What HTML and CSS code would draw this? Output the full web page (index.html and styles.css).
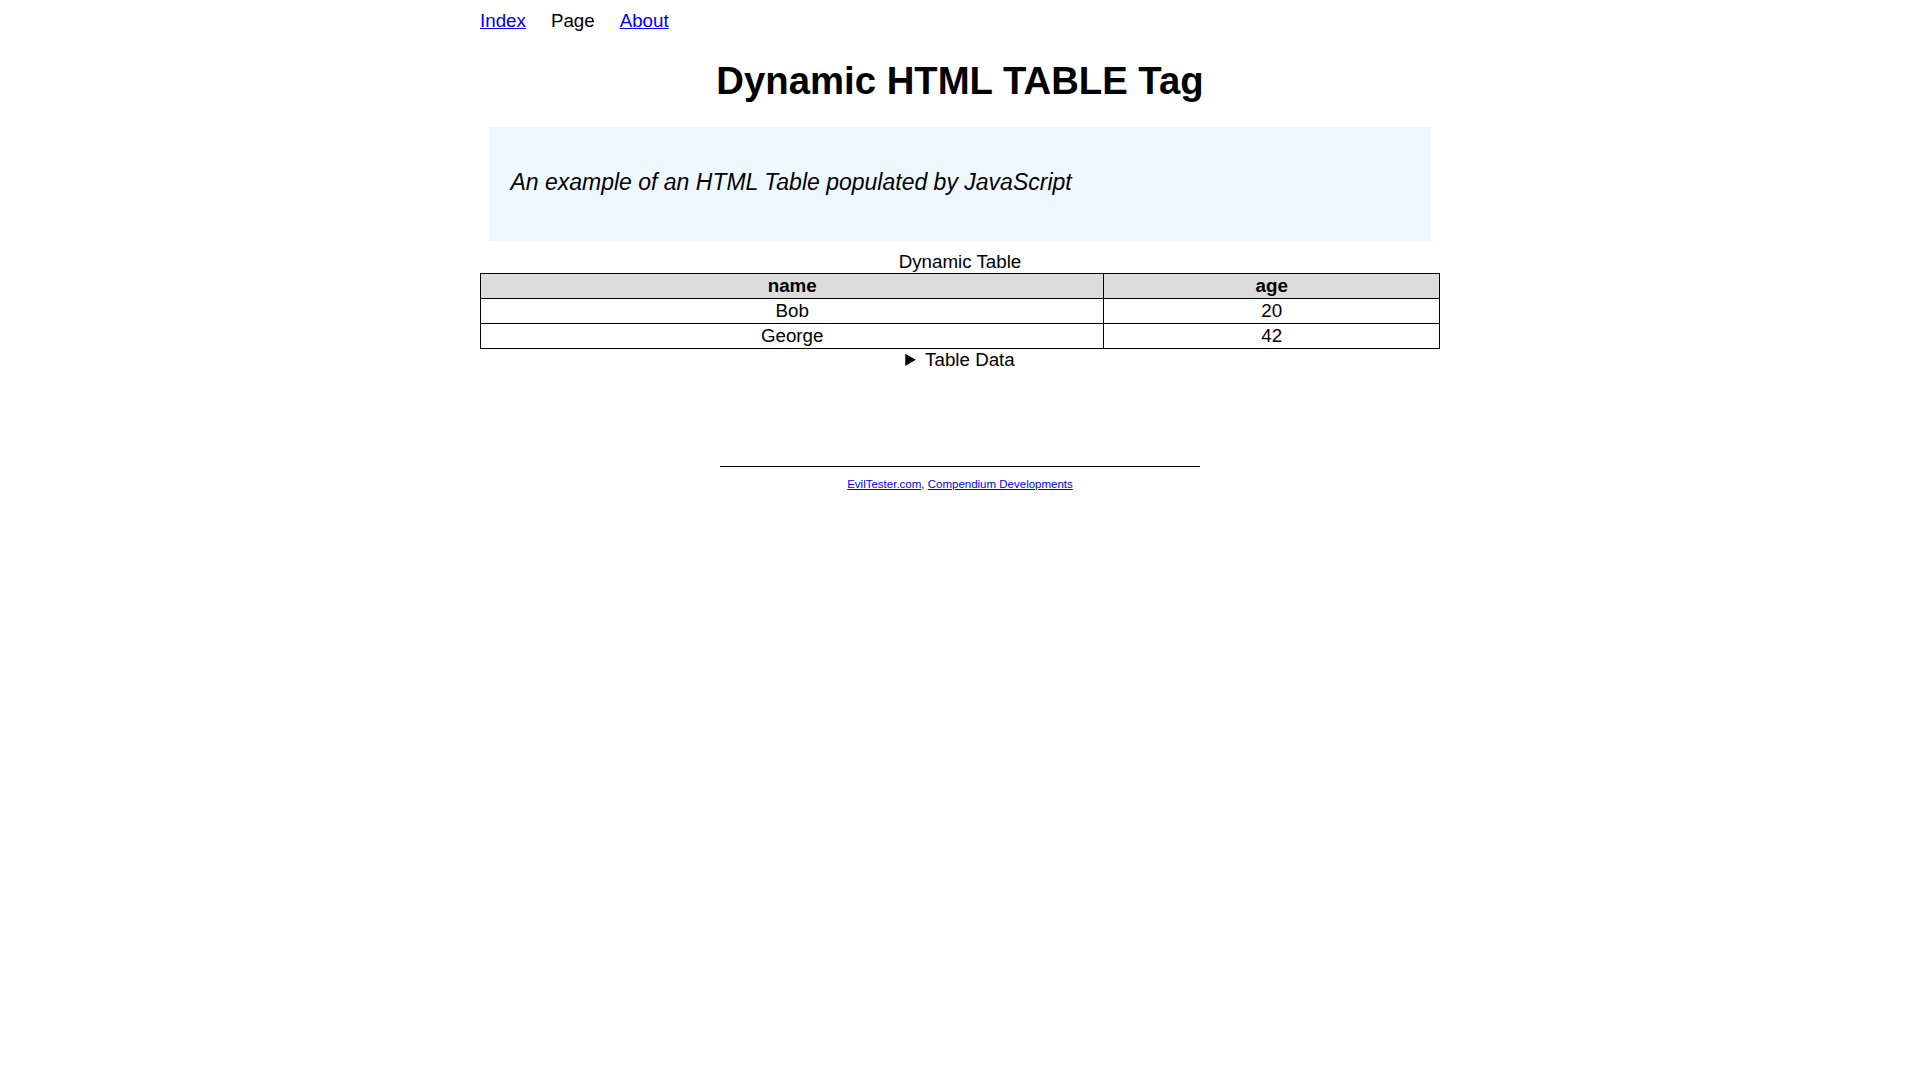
FILE: index.html
```html
<!DOCTYPE html>
<html lang="en">
<head>
<meta charset="utf-8">
<title>Dynamic HTML TABLE Tag</title>
<link rel="stylesheet" href="styles.css">
</head>
<body>
<div class="page">
  <nav class="nav">
    <a href="#" class="nav-link">Index</a>
    <span class="nav-current">Page</span>
    <a href="#" class="nav-link">About</a>
  </nav>
  <h1 class="title">Dynamic HTML TABLE Tag</h1>
  <div class="explanation">
    <p class="explanation-text">An example of an HTML Table populated by JavaScript</p>
  </div>
  <table class="data-table">
    <caption class="data-caption">Dynamic Table</caption>
    <thead>
      <tr><th class="col-name">name</th><th class="col-age">age</th></tr>
    </thead>
    <tbody>
      <tr><td>Bob</td><td>20</td></tr>
      <tr><td>George</td><td>42</td></tr>
    </tbody>
  </table>
  <details class="table-data">
    <summary class="table-data-summary">Table Data</summary>
  </details>
  <footer class="footer">
    <hr class="footer-rule">
    <p class="footer-links"><a href="#" class="footer-link">EvilTester.com</a>, <a href="#" class="footer-link">Compendium Developments</a></p>
  </footer>
</div>
</body>
</html>
```

FILE: styles.css
```css
html, body {
  margin: 0;
  padding: 0;
  background: #ffffff;
}

body {
  font-family: "Liberation Sans", Arial, sans-serif;
  font-size: 18.75px;
  color: #000000;
}

.page {
  width: 960px;
  margin: 0 auto;
  padding-top: 10px;
}

.nav {
  display: flex;
  gap: 25px;
  line-height: 21.5px;
}

.nav-link {
  color: #0000ee;
  text-decoration: underline;
}

.nav-current {
  color: #000000;
}

.title {
  margin: 27.5px 0 24.2px;
  font-size: 38.3px;
  font-weight: bold;
  text-align: center;
  line-height: 43.8px;
}

.explanation {
  margin: 0 9.4px 10.2px;
  padding: 42.1px 21px 45.5px;
  background: #f0f8ff;
}

.explanation-text {
  margin: 0;
  font-size: 23px;
  font-style: italic;
  line-height: 26.4px;
}

.data-table {
  width: 960px;
  border-collapse: collapse;
  border: 1px solid #000000;
}

.data-caption {
  line-height: 21.5px;
  padding-bottom: 0.4px;
  text-align: center;
}

.data-table th,
.data-table td {
  border: 1px solid #000000;
  padding: 1px 2px;
  line-height: 22px;
  text-align: center;
}

.data-table th {
  background: #dcdcdc;
  font-weight: bold;
}

.col-name {
  width: 65%;
}

.col-age {
  width: 35%;
}

.table-data {
  text-align: center;
  line-height: 21.5px;
}

.table-data-summary {
  cursor: pointer;
}

.footer {
  margin-top: 95.5px;
}

.footer-rule {
  width: 480px;
  height: 0;
  margin: 0 auto;
  border: 0;
  border-top: 1px solid #000000;
}

.footer-links {
  margin: 11px 0 0;
  font-size: 11.5px;
  line-height: 13.2px;
  text-align: center;
}

.footer-link {
  color: #0000ee;
  text-decoration: underline;
}
```
